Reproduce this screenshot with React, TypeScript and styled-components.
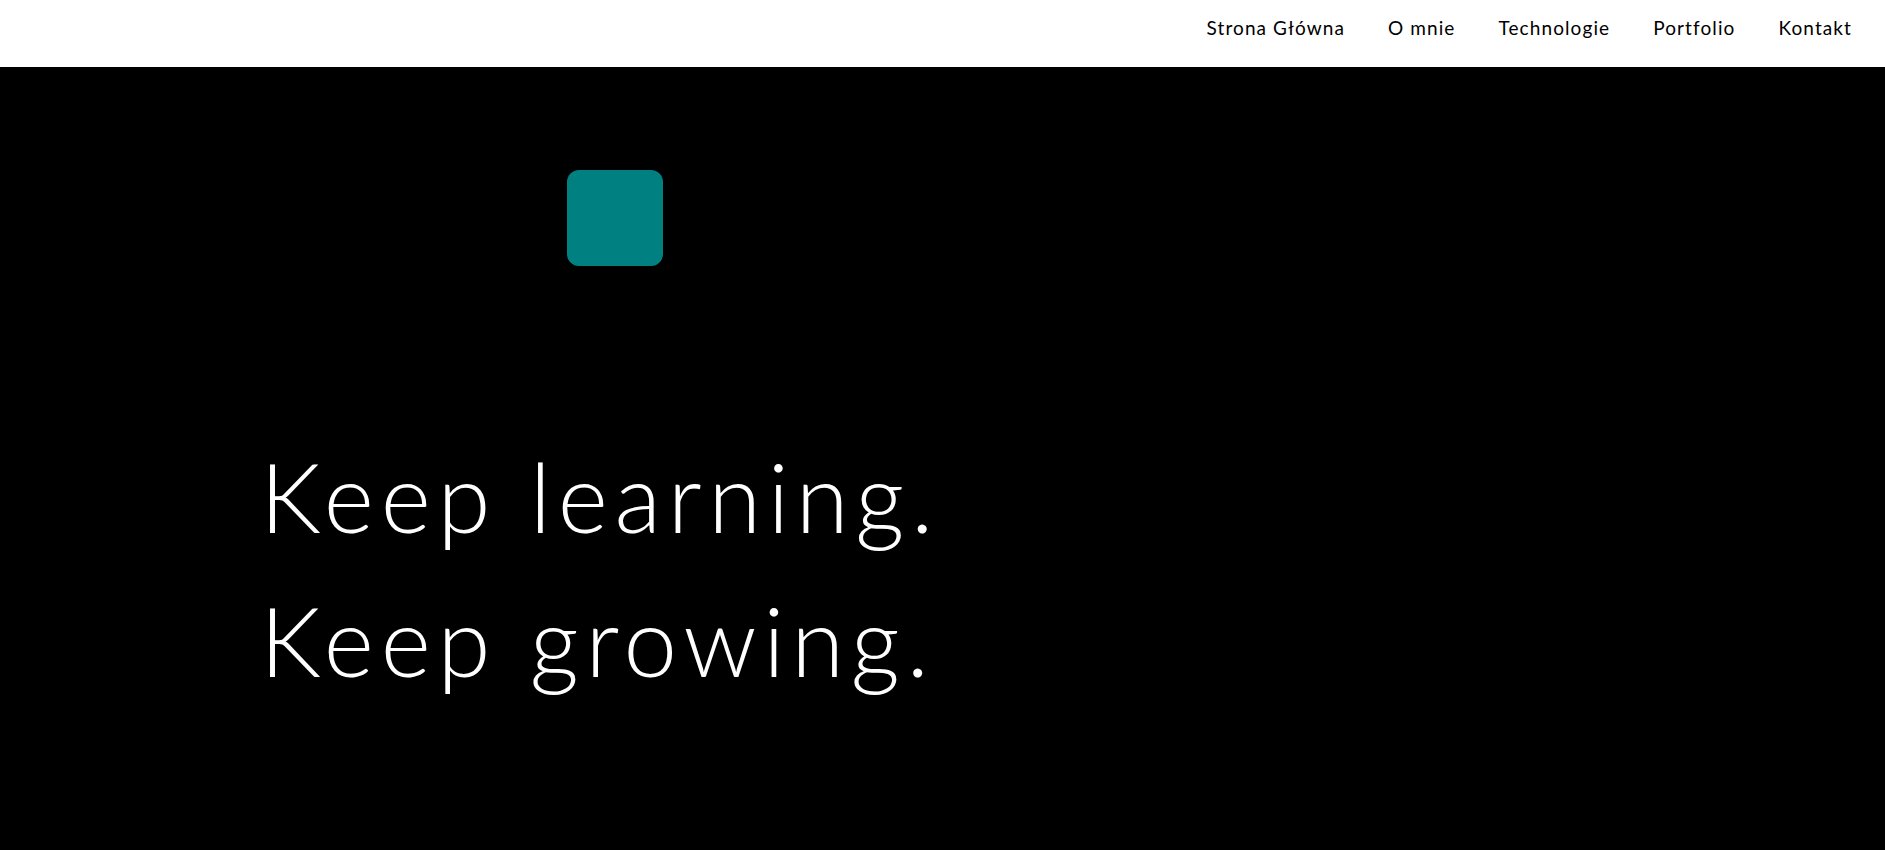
import React from "react";
import styled, { createGlobalStyle } from "styled-components";

const GlobalStyle = createGlobalStyle`
  html, body { margin: 0; padding: 0; }
  body {
    background: #000;
    font-family: "Lato", "Open Sans", sans-serif;
    -webkit-font-smoothing: antialiased;
  }
  * { box-sizing: border-box; }
`;

const Header = styled.header`
  height: 67px;
  background: #fff;
  display: flex;
  justify-content: flex-end;
  align-items: flex-start;
  padding: 16px 33px 0 0;
`;

const Nav = styled.nav`
  display: flex;
  gap: 43px;
`;

const NavLink = styled.a`
  font-family: "Lato", sans-serif;
  font-size: 19px;
  font-weight: 400;
  letter-spacing: 1.1px;
  line-height: normal;
  color: #000;
  text-decoration: none;
  cursor: pointer;
`;

const Hero = styled.main`
  min-height: calc(100vh - 67px);
  background: #000;
  display: flex;
  flex-direction: column;
  align-items: flex-start;
  padding: 103px 0 0 260px;
`;

const Tile = styled.div`
  width: 96px;
  height: 96px;
  margin-left: 307px;
  border-radius: 12px;
  background: #008080;
`;

const Headline = styled.h1`
  margin: 158px 0 0;
  font-family: "Lato", sans-serif;
  font-weight: 300;
  font-size: 96px;
  line-height: 144px;
  letter-spacing: 6.7px;
  color: #fff;
`;

const Line = styled.span`
  display: block;
`;

const links = ["Strona Główna", "O mnie", "Technologie", "Portfolio", "Kontakt"];

export default function App() {
  return (
    <>
      <GlobalStyle />
      <Header>
        <Nav>
          {links.map((l) => (
            <NavLink key={l}>{l}</NavLink>
          ))}
        </Nav>
      </Header>
      <Hero>
        <Tile />
        <Headline>
          <Line>Keep learning.</Line>
          <Line>Keep growing.</Line>
        </Headline>
      </Hero>
    </>
  );
}
